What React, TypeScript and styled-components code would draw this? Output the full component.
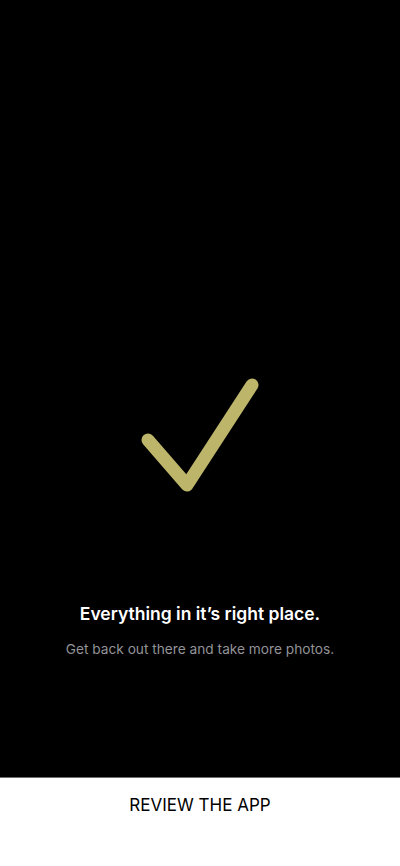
import React from "react";
import styled, { createGlobalStyle } from "styled-components";

const Global = createGlobalStyle`
  html, body { margin: 0; padding: 0; background: #fff; }
  body { font-family: Inter, "Noto Sans", sans-serif; -webkit-font-smoothing: antialiased; }
`;

const Screen = styled.div`
  display: flex;
  flex-direction: column;
  width: 400px;
  height: 866px;
`;

const Main = styled.main`
  flex: 1;
  background: #000;
  display: flex;
  flex-direction: column;
  align-items: center;
  padding-top: 370px;
  box-sizing: border-box;
`;

const Check = styled.svg`
  width: 130px;
  height: 130px;
  display: block;
`;

const Title = styled.h1`
  margin: 103px 0 0;
  font-size: 17.5px;
  line-height: 22px;
  font-weight: 600;
  color: #fff;
  text-align: center;
`;

const Subtitle = styled.p`
  margin: 15px 0 0;
  font-size: 13.7px;
  line-height: 18px;
  font-weight: 400;
  color: #939398;
  text-align: center;
`;

const Footer = styled.footer`
  height: 89px;
  flex: none;
  border-top: 1px solid #6e6e6e;
  background: #fff;
  display: flex;
  justify-content: center;
  padding-top: 16px;
  box-sizing: border-box;
`;

const ReviewButton = styled.button`
  border: none;
  background: none;
  padding: 0;
  height: 22px;
  font-family: Inter, "Noto Sans", sans-serif;
  font-size: 17px;
  line-height: 22px;
  font-weight: 400;
  color: #000;
  cursor: pointer;
`;

export default function App() {
  return (
    <Screen>
      <Global />
      <Main>
        <Check viewBox="0 0 130 130">
          <polyline
            points="13,70 52,115 117,15"
            fill="none"
            stroke="#bdb56a"
            strokeWidth={13}
            strokeLinecap="round"
            strokeLinejoin="round"
          />
        </Check>
        <Title>Everything in it’s right place.</Title>
        <Subtitle>Get back out there and take more photos.</Subtitle>
      </Main>
      <Footer>
        <ReviewButton>REVIEW THE APP</ReviewButton>
      </Footer>
    </Screen>
  );
}
